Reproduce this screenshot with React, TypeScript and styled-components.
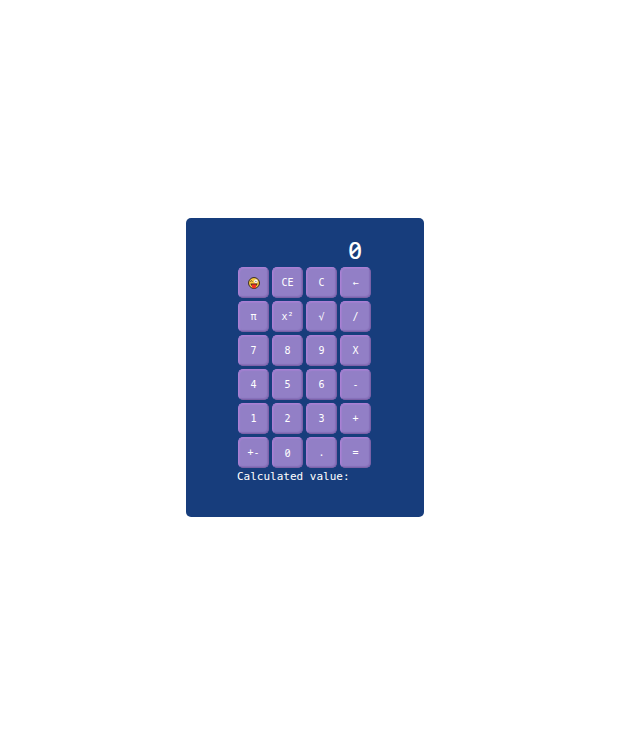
import React, { useState } from "react";
import styled, { createGlobalStyle } from "styled-components";

const GlobalStyle = createGlobalStyle`
  * { box-sizing: border-box; }
  body { margin: 0; background: #fff; }
`;

const Page = styled.main`
  min-height: 100vh;
  display: flex;
  align-items: center;
  justify-content: center;
  padding: 0 20px 6px 0;
`;

const Calculator = styled.section`
  display: flex;
  flex-direction: column;
  padding: 16px 52px 33px 51px;
  border-radius: 5px;
  background: #173d7c;
  color: #fff;
  font-family: "DejaVu Sans Mono", monospace;
`;

const Display = styled.output`
  padding-right: 10px;
  font: 500 24px/32px "Noto Sans", sans-serif;
  font-feature-settings: "zero";
  text-align: right;
`;

const Keypad = styled.div`
  display: grid;
  grid-template-columns: repeat(4, 31px);
  grid-auto-rows: 31px;
  gap: 3px;
  padding: 1px;
`;

const Key = styled.button<{ $slashed?: boolean }>`
  display: flex;
  align-items: center;
  justify-content: center;
  padding: 1px 0 0;
  border: 1px solid;
  border-color: #aa80d4 #7b62a8 #7b62a8 #aa80d4;
  border-radius: 5px;
  background: #927fc6;
  box-shadow: inset 1px 1px 1px #a080cf, inset -1px -1px 1px #866fb8;
  color: #fff;
  font-family: ${(p) => (p.$slashed ? '"Noto Sans", sans-serif' : '"DejaVu Sans Mono", monospace')};
  font-size: 10px;
  line-height: 12px;
  font-feature-settings: "zero";
  cursor: pointer;
`;

const Result = styled.p`
  margin: 0;
  font-size: 11px;
  line-height: 15px;
`;

const Face = () => (
  <svg width="12" height="12" viewBox="0 0 24 24" aria-hidden="true">
    <circle cx="12" cy="12" r="10.9" fill="#fccb3d" stroke="#35291f" strokeWidth="2" />
    <path d="M4.5 9q2.5-3 4.5 0" fill="none" stroke="#35291f" strokeWidth="1.6" />
    <circle cx="15.8" cy="8.4" r="3.9" fill="#fff" stroke="#c19b55" strokeWidth=".6" />
    <circle cx="15.8" cy="8.4" r="1.1" fill="#35291f" />
    <path d="M5 13h14q-.7 6-7 6t-7-6z" fill="#572b22" />
    <path d="M8 15h8v4.5q0 3.5-4 3.5t-4-3.5z" fill="#f32f24" />
  </svg>
);

const keys = [
  "face", "CE", "C", "←",
  "π", "x²", "√", "/",
  "7", "8", "9", "X",
  "4", "5", "6", "-",
  "1", "2", "3", "+",
  "+-", "0", ".", "=",
];

const compute = (a: number, op: string, b: number) =>
  op === "+" ? a + b : op === "-" ? a - b : op === "X" ? a * b : a / b;

export default function App() {
  const [value, setValue] = useState("0");
  const [pending, setPending] = useState<{ left: number; op: string } | null>(null);
  const [fresh, setFresh] = useState(true);
  const [result, setResult] = useState("");

  const show = (n: number) => {
    setValue(String(n));
    setFresh(true);
  };

  const press = (key: string) => {
    const n = Number(value);
    if (/^\d$/.test(key)) {
      setValue(fresh || value === "0" ? key : value + key);
      setFresh(false);
    } else if (key === ".") {
      if (fresh) setValue("0.");
      else if (!value.includes(".")) setValue(value + ".");
      setFresh(false);
    } else if (key === "CE") show(0);
    else if (key === "C") {
      show(0);
      setPending(null);
      setResult("");
    } else if (key === "←") setValue(value.slice(0, -1) || "0");
    else if (key === "π") show(Math.PI);
    else if (key === "x²") show(n * n);
    else if (key === "√") show(Math.sqrt(n));
    else if (key === "+-") setValue(String(-n));
    else if (key === "=") {
      const total = pending ? compute(pending.left, pending.op, n) : n;
      show(total);
      setResult(String(total));
      setPending(null);
    } else if (key !== "face") {
      setPending({ left: pending ? compute(pending.left, pending.op, n) : n, op: key });
      setFresh(true);
    }
  };

  return (
    <>
      <GlobalStyle />
      <Page>
        <Calculator aria-label="Calculator">
          <Display>{value}</Display>
          <Keypad>
            {keys.map((key) => (
              <Key
                key={key}
                type="button"
                $slashed={key === "0"}
                aria-label={key === "face" ? "Winking face" : undefined}
                onClick={() => press(key)}
              >
                {key === "face" ? <Face /> : key}
              </Key>
            ))}
          </Keypad>
          <Result>Calculated value: {result}</Result>
        </Calculator>
      </Page>
    </>
  );
}
